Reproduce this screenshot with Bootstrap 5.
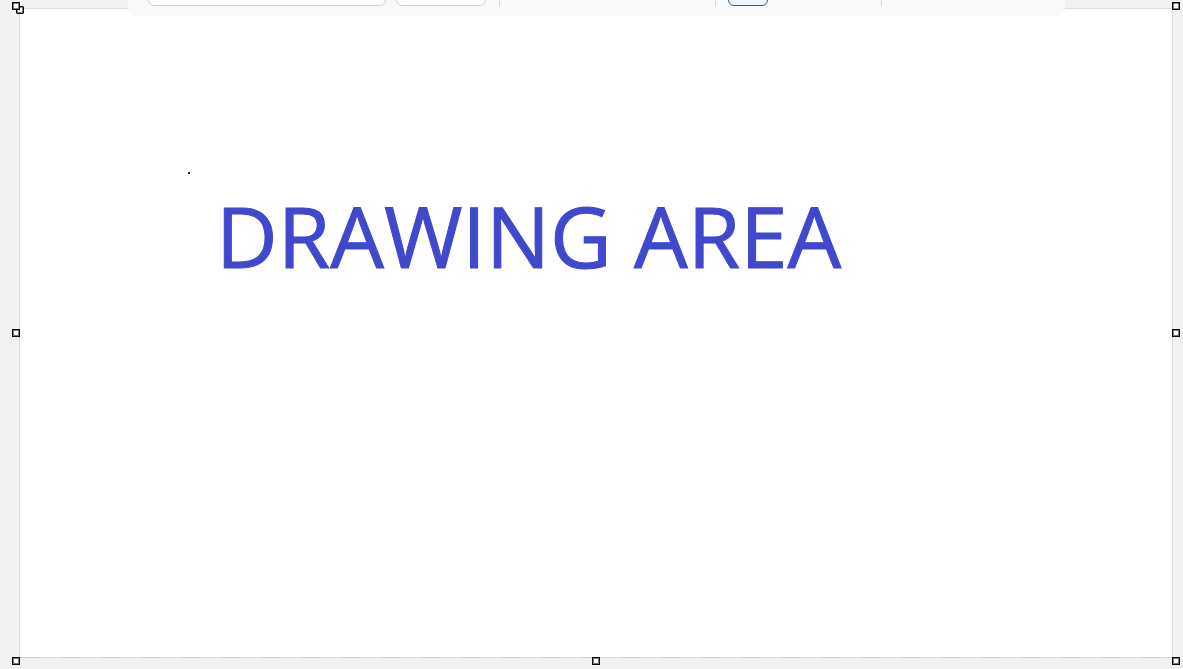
<!DOCTYPE html>
<html lang="en">
<head>
    <meta charset="utf-8">
    <meta name="viewport" content="width=device-width, initial-scale=1">
    <title>Drawing Area</title>
    <link rel="stylesheet" href="https://cdn.jsdelivr.net/npm/bootstrap@5.3.0/dist/css/bootstrap.min.css">
    <style>
        body { background: #f2f2f2; font-family: "Open Sans", "Liberation Sans", sans-serif; }
        .stage { padding: 9px 11px 12px 20px; }
        .sheet { background: #fff; box-shadow: 0 0 0 1px #dcdcdc; }
        .sheet-content { padding: 163px 168px; }
        .pen-dot { width: 2px; height: 2px; background: #222; }
        .sheet-title { margin: 11px 0 0 28px; font-size: 85px; line-height: 100px; font-weight: 400; color: #4048cc; -webkit-text-stroke: 1px #4048cc; }

        /* dashed page edge under the sheet */
        .sheet-edge { left: 0; right: 0; top: 100%; height: 1px; background: repeating-linear-gradient(90deg, #cdcdcd 0 20px, #dedede 20px 40px); }

        /* floating toolbar, only its lower edge shows */
        .tool-strip { top: 0; left: 128px; right: 118px; height: 16px; padding: 0 20px 10px; background: #f9f9f9; border-radius: 0 0 8px 8px; }
        .tool-strip .form-control, .tool-strip .form-select, .tool-strip .btn { height: 32px; border-radius: 6px; border-color: #cfcfcf; font-size: 14px; }
        .tool-strip .tool-font { width: 238px; }
        .tool-strip .tool-size { width: 90px; margin-left: 10px; background-color: #fff; }
        .tool-strip .tool-toggle { width: 40px; margin-left: 12px; background: #f0f5f9; border-color: #2b6288; }
        .tool-line { width: 1px; height: 32px; background: #d6d6d6; }
        .line-near { margin-left: 13px; }
        .line-far { margin-left: 215px; }
        .line-end { margin-left: 113px; }

        .handle { width: 8px; height: 8px; padding: 0; border: 1px solid #0c0c10; border-radius: 0; background: #fff; box-shadow: inset 0 0 0 1px #777; }
        .h-top { top: -7px; }
        .h-mid { top: calc(50% - 4px); }
        .h-bottom { top: 100%; }
        .h-left { left: -8px; }
        .h-center { left: calc(50% - 4px); }
        .h-right { left: 100%; }
        .h-origin { top: -3px; left: -4px; border-radius: 1px; }
    </style>
</head>
<body class="overflow-hidden">
<main class="stage vh-100 d-flex">
    <div class="sheet flex-grow-1 position-relative">
        <div class="sheet-content">
            <div class="pen-dot"></div>
            <h1 class="sheet-title text-nowrap">DRAWING AREA</h1>
        </div>
        <div class="sheet-edge position-absolute"></div>
        <button type="button" class="handle position-absolute h-origin" aria-label="Move origin"></button>
        <button type="button" class="handle position-absolute h-top h-left" aria-label="Resize top left"></button>
        <button type="button" class="handle position-absolute h-top h-right" aria-label="Resize top right"></button>
        <button type="button" class="handle position-absolute h-mid h-left" aria-label="Resize left"></button>
        <button type="button" class="handle position-absolute h-mid h-right" aria-label="Resize right"></button>
        <button type="button" class="handle position-absolute h-bottom h-left" aria-label="Resize bottom left"></button>
        <button type="button" class="handle position-absolute h-bottom h-center" aria-label="Resize bottom"></button>
        <button type="button" class="handle position-absolute h-bottom h-right" aria-label="Resize bottom right"></button>
    </div>
</main>
<div class="tool-strip position-absolute d-flex align-items-end overflow-hidden" role="toolbar" aria-label="Text tools">
    <input type="text" class="form-control flex-shrink-0 tool-font" aria-label="Font">
    <select class="form-select flex-shrink-0 tool-size" aria-label="Font size"><option></option></select>
    <div class="tool-line flex-shrink-0 line-near"></div>
    <div class="tool-line flex-shrink-0 line-far"></div>
    <button type="button" class="btn flex-shrink-0 tool-toggle" aria-label="Align" aria-pressed="true"></button>
    <div class="tool-line flex-shrink-0 line-end"></div>
</div>
<script src="https://cdn.jsdelivr.net/npm/bootstrap@5.3.0/dist/js/bootstrap.bundle.min.js"></script>
</body>
</html>
